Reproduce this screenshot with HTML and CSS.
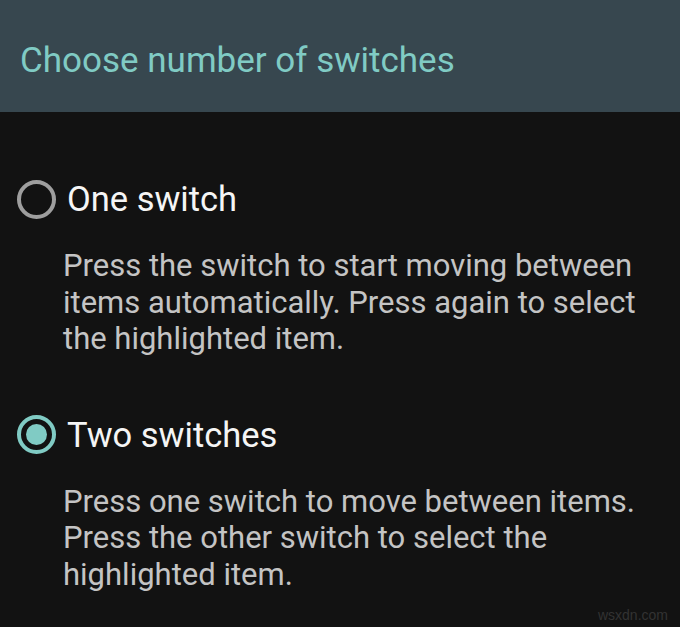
FILE: index.html
```html
<!DOCTYPE html>
<html>
<head>
<meta charset="utf-8">
<link rel="stylesheet" href="styles.css">
</head>
<body>
<div class="screen">
  <header class="header"><h1 class="title">Choose number of switches</h1></header>
  <main class="list">
    <div class="option">
      <div class="row">
        <span class="radio"></span>
        <span class="label">One switch</span>
      </div>
      <p class="desc">Press the switch to start moving between items automatically. Press again to select the highlighted item.</p>
    </div>
    <div class="option">
      <div class="row">
        <span class="radio checked"></span>
        <span class="label">Two switches</span>
      </div>
      <p class="desc">Press one switch to move between items. Press the other switch to select the highlighted item.</p>
    </div>
  </main>
  <div class="mark">wsxdn.com</div>
</div>
</body>
</html>
```

FILE: styles.css
```css
html, body { margin: 0; padding: 0; }
body { background: #121212; font-family: Roboto, "Noto Sans", sans-serif; }
.screen { width: 680px; height: 627px; position: relative; overflow: hidden; background: #121212; }
.header { height: 112px; background: #37474f; display: flex; align-items: center; padding-left: 20px; padding-top: 8px; box-sizing: border-box; }
.title { margin: 0; font-weight: 400; font-size: 35px; color: #80cbc4; letter-spacing: 0; }
.list { padding-top: 63px; }
.option { margin-bottom: 53px; }
.row { display: flex; align-items: center; height: 48px; }
.radio { width: 31px; height: 31px; border: 4px solid #9e9e9e; border-radius: 50%; margin-left: 17px; margin-right: 11px; box-sizing: content-box; position: relative; }
.radio.checked { border-color: #80cbc4; }
.radio.checked::after { content: ""; position: absolute; left: 5px; top: 5px; width: 21px; height: 21px; border-radius: 50%; background: #80cbc4; }
.label { font-size: 34.5px; color: #f5f5f5; }
.desc { margin: 25px 0 0 63px; width: 610px; font-size: 31px; line-height: 36.5px; color: #c4c4c4; }
.mark { position: absolute; right: 12px; bottom: 4px; font-family: "Liberation Sans", sans-serif; font-size: 14px; color: #333333; }
```
